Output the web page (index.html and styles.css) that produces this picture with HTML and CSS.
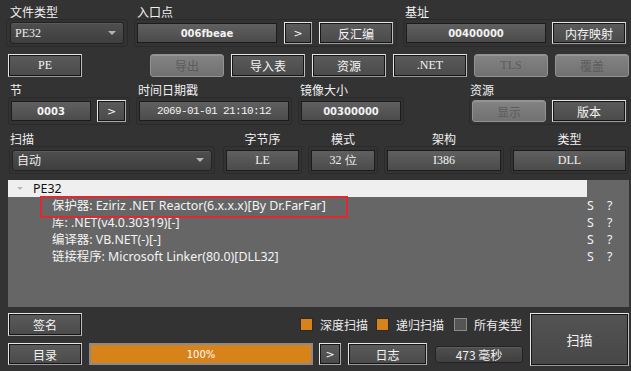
FILE: index.html
```html
<!DOCTYPE html>
<html>
<head>
<meta charset="utf-8">
<link rel="stylesheet" href="styles.css">
</head>
<body>
<div class="app">
  <div class="row r1">
    <div class="grp g-ft">
      <div class="lbl">文件类型</div>
      <div class="frame">
        <div class="combo w114"><span>PE32</span><i class="tri"></i></div>
      </div>
    </div>
    <div class="grp g-ep">
      <div class="lbl">入口点</div>
      <div class="frame">
        <div class="field bold w140">006fbeae</div>
        <div class="btn w28 arrow">&gt;</div>
        <div class="btn w74">反汇编</div>
      </div>
    </div>
    <div class="grp g-base">
      <div class="lbl">基址</div>
      <div class="frame">
        <div class="field bold w140">00400000</div>
        <div class="btn w74">内存映射</div>
      </div>
    </div>
  </div>

  <div class="row r2">
    <div class="btn w74 h23 lat">PE</div>
    <div class="btn dis w74 h23 first">导出</div>
    <div class="btn w74 h23">导入表</div>
    <div class="btn w74 h23">资源</div>
    <div class="btn w74 h23 lat">.NET</div>
    <div class="btn dis w74 h23 lat">TLS</div>
    <div class="btn dis w74 h23">覆盖</div>
  </div>

  <div class="row r3">
    <div class="grp g-sec">
      <div class="lbl">节</div>
      <div class="frame gap6">
        <div class="field bold w80">0003</div>
        <div class="btn w29 arrow">&gt;</div>
      </div>
    </div>
    <div class="grp g-time">
      <div class="lbl">时间日期戳</div>
      <div class="frame">
        <div class="field mono w150">2069-01-01 21:10:12</div>
      </div>
    </div>
    <div class="grp g-img">
      <div class="lbl">镜像大小</div>
      <div class="frame">
        <div class="field bold w100">00300000</div>
      </div>
    </div>
    <div class="grp g-res">
      <div class="lbl">资源</div>
      <div class="frame gap6">
        <div class="btn dis w74">显示</div>
        <div class="btn w74">版本</div>
      </div>
    </div>
  </div>

  <div class="row r4">
    <div class="grp g-scan">
      <div class="lbl">扫描</div>
      <div class="frame">
        <div class="combo w200 h21"><span>自动</span><i class="tri"></i></div>
      </div>
    </div>
    <div class="grp g-end">
      <div class="lbl c">字节序</div>
      <div class="frame">
        <div class="field lat w73 h21">LE</div>
      </div>
    </div>
    <div class="grp g-mode">
      <div class="lbl c">模式</div>
      <div class="frame">
        <div class="field lat w64 h21">32 位</div>
      </div>
    </div>
    <div class="grp g-arch">
      <div class="lbl c">架构</div>
      <div class="frame">
        <div class="field lat w114 h21">I386</div>
      </div>
    </div>
    <div class="grp g-type">
      <div class="lbl c">类型</div>
      <div class="frame">
        <div class="field lat w113 h21">DLL</div>
      </div>
    </div>
  </div>

  <div class="tree">
    <div class="trow head">
      <div class="name"><i class="ttri"></i><span>PE32</span></div>
      <div class="s"></div>
      <div class="q"></div>
    </div>
    <div class="trow">
      <div class="name child">保护器: Eziriz .NET Reactor(6.x.x.x)[By Dr.FarFar]</div>
      <div class="s">S</div>
      <div class="q">?</div>
    </div>
    <div class="trow">
      <div class="name child">库: .NET(v4.0.30319)[-]</div>
      <div class="s">S</div>
      <div class="q">?</div>
    </div>
    <div class="trow">
      <div class="name child">编译器: VB.NET(-)[-]</div>
      <div class="s">S</div>
      <div class="q">?</div>
    </div>
    <div class="trow">
      <div class="name child">链接程序: Microsoft Linker(80.0)[DLL32]</div>
      <div class="s">S</div>
      <div class="q">?</div>
    </div>
    <div class="mark"></div>
  </div>

  <div class="bottom">
    <div class="bleft">
      <div class="brow1">
        <div class="btn w74 h23">签名</div>
        <div class="checks">
          <div class="chk on"></div><span class="clbl">深度扫描</span>
          <div class="chk on"></div><span class="clbl">递归扫描</span>
          <div class="chk"></div><span class="clbl">所有类型</span>
        </div>
      </div>
      <div class="brow2">
        <div class="btn w74 h22">目录</div>
        <div class="progress"><span>100%</span></div>
        <div class="btn w22 h22 arrow">&gt;</div>
        <div class="btn w79 h22">日志</div>
        <div class="timef">473 毫秒</div>
      </div>
    </div>
    <div class="btn bigbtn">扫描</div>
  </div>
</div>
</body>
</html>
```

FILE: styles.css
```css
html, body {
  margin: 0;
  padding: 0;
}
body {
  width: 631px;
  height: 371px;
  overflow: hidden;
  background: #333333;
  font-family: "Noto Sans CJK SC", "Noto Sans", sans-serif;
  font-size: 12px;
  color: #ececec;
}
.app {
  padding-top: 5px;
}
.row {
  display: flex;
}
.lbl {
  height: 14px;
  line-height: 14px;
  font-size: 12px;
  white-space: nowrap;
  color: #f0f0f0;
}
.lbl.c {
  text-align: center;
}
.frame {
  box-sizing: border-box;
  display: flex;
  align-items: center;
  height: 28px;
  border: 1px solid #2a2a2a;
  border-radius: 3px;
  padding: 0 2px;
  gap: 7px;
}
.frame.gap6 {
  gap: 6px;
}

/* widths */
.w22 { width: 22px; }
.w28 { width: 28px; }
.w29 { width: 29px; }
.w64 { width: 64px; }
.w73 { width: 73px; }
.w74 { width: 74px; }
.w79 { width: 79px; }
.w80 { width: 80px; }
.w100 { width: 100px; }
.w113 { width: 113px; }
.w114 { width: 114px; }
.w140 { width: 140px; }
.w150 { width: 150px; }
.w200 { width: 200px; }

/* buttons */
.btn {
  box-sizing: border-box;
  height: 22px;
  display: flex;
  align-items: center;
  justify-content: center;
  border: 1px solid #e6e6e6;
  border-right-color: #bdbdbd;
  border-bottom-color: #9a9a9a;
  box-shadow: inset 0 0 0 1px #161616;
  background: linear-gradient(#5b5b5b, #4a4a4a);
  color: #f4f4f4;
  font-size: 12px;
  white-space: nowrap;
  flex: none;
}
.btn.h22 { height: 22px; }
.btn.h23 { height: 23px; }
.btn.dis {
  border: 1px solid #929292;
  border-radius: 3px;
  box-shadow: inset 0 1px 0 #959595;
  background: linear-gradient(#838383, #717171);
  color: #5c5c5c;
}
.btn.arrow {
  font-family: "DejaVu Sans", sans-serif;
  font-size: 11px;
  border-color: #e6e6e6 #a8a8a8 #a8a8a8 #e6e6e6;
}
.lat {
  font-family: "Liberation Serif", serif;
  font-size: 12px;
}

/* fields */
.field {
  box-sizing: border-box;
  height: 20px;
  display: flex;
  align-items: center;
  justify-content: center;
  border: 1px solid #1c1c1c;
  background: linear-gradient(#606060, #4b4b4b);
  color: #f2f2f2;
  white-space: nowrap;
  flex: none;
}
.field.h21 { height: 21px; }
.field.bold {
  font-family: "DejaVu Sans", sans-serif;
  font-weight: bold;
  font-size: 10px;
}
.field.mono {
  font-family: "Liberation Mono", monospace;
  font-size: 11px;
  letter-spacing: -0.6px;
}

/* combo */
.combo {
  box-sizing: border-box;
  height: 22px;
  display: flex;
  align-items: center;
  justify-content: space-between;
  border: 1px solid #222222;
  border-radius: 3px;
  background: linear-gradient(#4f4f4f, #3e3e3e);
  box-shadow: inset 0 1px 0 #5a5a5a;
  padding: 0 7px 0 4px;
  flex: none;
}
.combo.h21 { height: 21px; }
.combo span {
  font-family: "Liberation Serif", "Noto Sans CJK SC", serif;
  font-size: 12px;
}
.tri {
  width: 0;
  height: 0;
  border-left: 4px solid transparent;
  border-right: 4px solid transparent;
  border-top: 4px solid #b4b4b4;
}

/* row 1 */
.r1 {
  margin-left: 6px;
  gap: 6px;
}
.g-ft { width: 122px; }
.g-ft .lbl { padding-left: 4px; }
.g-ft .frame { padding-left: 3px; }
.g-ep { width: 263px; }
.g-ep .lbl { padding-left: 3px; }
.g-base { width: 226px; }
.g-base .lbl { padding-left: 2px; }
.g-base .frame { gap: 6px; }

/* row 2 */
.r2 {
  margin-top: 7px;
  margin-left: 8px;
  gap: 7px;
}
.r2 .first {
  margin-left: 61px;
}

/* row 3 */
.r3 {
  margin-top: 6px;
  margin-left: 8px;
}
.r3 .lbl { padding-left: 2px; }
.g-sec { width: 122px; }
.g-time { width: 156px; margin-left: 6px; }
.g-img { width: 106px; margin-left: 6px; }
.g-res { width: 160px; margin-left: 65px; }
.g-res .lbl { padding-left: 1px; }

/* row 4 */
.r4 {
  margin-top: 7px;
  margin-left: 9px;
}
.g-scan { width: 206px; }
.g-scan .lbl { padding-left: 1px; }
.g-end { width: 79px; margin-left: 8px; }
.g-mode { width: 70px; margin-left: 6px; }
.g-arch { width: 120px; margin-left: 6px; }
.g-type { width: 119px; margin-left: 6px; }

/* tree */
.tree {
  position: relative;
  margin: 6px 0 0 8px;
  width: 621px;
  height: 127px;
  background: #666666;
  font-family: "Noto Sans", "Noto Sans CJK SC", sans-serif;
  font-size: 12.4px;
}
.trow {
  display: grid;
  grid-template-columns: 579px 20px 22px;
  height: 17px;
  line-height: 17px;
  color: #f4f4f4;
}
.trow .name {
  white-space: nowrap;
}
.trow.head .name {
  background: #efefef;
  color: #111111;
  display: flex;
  align-items: center;
}
.ttri {
  width: 0;
  height: 0;
  margin-left: 9px;
  margin-right: 10px;
  border-left: 3px solid transparent;
  border-right: 3px solid transparent;
  border-top: 3px solid #b9b9b9;
}
.child {
  padding-left: 44px;
}
.s, .q {
  text-align: left;
}
.mark {
  position: absolute;
  left: 32px;
  top: 16px;
  width: 308px;
  height: 22px;
  box-sizing: border-box;
  border: 2px solid #e3262f;
}

/* bottom */
.bottom {
  display: flex;
  margin: 6px 0 0 8px;
}
.bleft {
  width: 515px;
}
.brow1 {
  display: flex;
  align-items: center;
  height: 23px;
}
.checks {
  display: flex;
  align-items: center;
  margin-left: auto;
  padding-right: 1px;
}
.chk {
  box-sizing: border-box;
  width: 13px;
  height: 13px;
  border: 1px solid #2b2b2b;
  background: #d8821c;
  margin-left: 8px;
}
.chk:first-child {
  margin-left: 0;
}
.chk:not(.on) {
  background: #555555;
  border-color: #8c8c8c;
  margin-left: 10px;
}
.clbl {
  margin-left: 7px;
  white-space: nowrap;
}
.brow2 {
  display: flex;
  align-items: center;
  margin-top: 7px;
  height: 22px;
}
.progress {
  box-sizing: border-box;
  width: 224px;
  height: 22px;
  margin-left: 7px;
  border: 2px solid #8a8a8a;
  background: #d8821a;
  display: flex;
  align-items: center;
  justify-content: center;
  font-family: "DejaVu Sans", sans-serif;
  font-size: 10px;
  color: #ffffff;
}
.brow2 .arrow {
  margin-left: 6px;
}
.brow2 .w79 {
  margin-left: 7px;
}
.timef {
  box-sizing: border-box;
  width: 88px;
  height: 17px;
  margin-left: 8px;
  border: 1px solid #232323;
  border-radius: 3px;
  background: linear-gradient(#505050, #3f3f3f);
  box-shadow: inset 0 1px 0 #5c5c5c;
  display: flex;
  align-items: center;
  justify-content: center;
  font-size: 12px;
  color: #f0f0f0;
  white-space: nowrap;
}
.bigbtn {
  width: 99px;
  height: 53px;
  margin-left: 7px;
  font-size: 13px;
  background: linear-gradient(#535353, #474747);
}
```
